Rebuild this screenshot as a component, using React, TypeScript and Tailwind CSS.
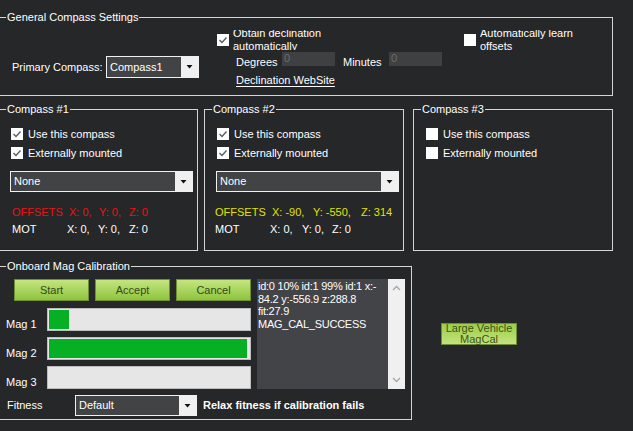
import type { ReactNode } from 'react'

const bg = 'bg-[#262729]'

function Check({ checked }: { checked?: boolean }) {
    return (
        <span className="w-[12px] h-[12px] bg-white flex items-center justify-center shrink-0">
            {checked && (
                <svg width="10" height="10" viewBox="0 0 10 10">
                    <path d="M1.5 5 L4 7.5 L8.5 2.5" fill="none" stroke="#5c5c5c" strokeWidth="1.4" />
                </svg>
            )}
        </span>
    )
}

function Combo({ value, className }: { value: string; className: string }) {
    return (
        <div className={`flex border border-[#f0f0f0] bg-[#424345] ${className}`}>
            <span className="flex-1 pl-[3px] self-center leading-[13px]">{value}</span>
            <span className="w-[17px] bg-[#f0f0f0] flex items-center justify-center">
                <svg width="7" height="4" viewBox="0 0 7 4">
                    <path d="M0.5 0h6L3.5 3.5z" fill="#111" />
                </svg>
            </span>
        </div>
    )
}

function Group({ title, className, children }: { title: string; className: string; children?: ReactNode }) {
    return (
        <div className={`relative shrink-0 border border-[#d6d6d6] ${className}`}>
            <span className={`absolute left-[7px] -top-[7px] px-px leading-[13px] ${bg}`}>{title}</span>
            {children}
        </div>
    )
}

// label whose first line is clipped by the control's box, as in the original form
function ClippedLabel({ lines }: { lines: [string, string] }) {
    return (
        <div className="ml-[4px] h-[20px] overflow-hidden">
            <div className="-mt-[3px] leading-[13px]">
                {lines[0]}
                <br />
                {lines[1]}
            </div>
        </div>
    )
}

type Row = { label: string; cols: [number, string][] }

const compasses: {
    title: string
    use: boolean
    ext: boolean
    shift: number
    offsets?: Row & { color: string }
    mot?: Row
}[] = [
    {
        title: 'Compass #1',
        use: true,
        ext: true,
        shift: 1,
        offsets: { label: 'OFFSETS', color: 'text-[#e81414]', cols: [[57, 'X: 0,'], [30, 'Y: 0,'], [30, 'Z: 0']] },
        mot: { label: 'MOT', cols: [[55, 'X: 0,'], [31, 'Y: 0,'], [31, 'Z: 0']] },
    },
    {
        title: 'Compass #2',
        use: true,
        ext: true,
        shift: -2,
        offsets: { label: 'OFFSETS', color: 'text-[#e2e200]', cols: [[57, 'X: -90,'], [41, 'Y: -550,'], [48, 'Z: 314']] },
        mot: { label: 'MOT', cols: [[55, 'X: 0,'], [32, 'Y: 0,'], [30, 'Z: 0']] },
    },
    { title: 'Compass #3', use: false, ext: false, shift: 0 },
]

const mags = [
    { name: 'Mag 1', pct: 10 },
    { name: 'Mag 2', pct: 99 },
    { name: 'Mag 3', pct: 0 },
]

// each col: [offset from previous token start, text]
function ValueRow({ row, color, shift }: { row: Row; color?: string; shift: number }) {
    return (
        <div className={`flex leading-[17px] ${color ?? ''}`} style={{ marginLeft: shift }}>
            <span className="shrink-0" style={{ width: row.cols[0][0] }}>{row.label}</span>
            {row.cols.map(([, text], i) => (
                <span key={text + i} className="shrink-0" style={{ width: row.cols[i + 1]?.[0] }}>
                    {text}
                </span>
            ))}
        </div>
    )
}

export default function App() {
    return (
        <div className={`w-[633px] h-[431px] overflow-hidden ${bg} text-white text-[11px] leading-[13px] font-['Liberation_Sans',Arial,sans-serif] flex flex-col`}>
            {/* General */}
            <Group title="General Compass Settings" className="-ml-[2px] mt-[17px] w-[615px] h-[79px]">
                <div className="flex items-start">
                    <div className="ml-[13px] mt-[38px] flex items-center">
                        <span className="w-[94px]">Primary Compass:</span>
                        <Combo value="Compass1" className="w-[93px] h-[22px]" />
                    </div>
                    <div className="ml-[18px] mt-[12px] w-[225px] flex flex-col">
                        <div className="flex h-[20px]">
                            <div className="mt-[4px]"><Check checked /></div>
                            <ClippedLabel lines={['Obtain declination', 'automatically']} />
                        </div>
                        <div className="flex items-start mt-[2px] h-[14px]">
                            <span className="ml-[19px] w-[46px] mt-[4px]">Degrees</span>
                            <span className="w-[53px] h-[14px] bg-[#3f4042] text-[#6c6c6c] pl-[2px]">0</span>
                            <span className="ml-[8px] w-[46px] mt-[4px]">Minutes</span>
                            <span className="w-[53px] h-[14px] bg-[#3f4042] text-[#6c6c6c] pl-[2px]">0</span>
                        </div>
                        <span className="ml-[19px] mt-[8px] underline underline-offset-[2px]">Declination WebSite</span>
                    </div>
                    <div className="ml-[22px] mt-[12px] flex h-[20px]">
                        <div className="mt-[4px]"><Check /></div>
                        <ClippedLabel lines={['Automatically learn', 'offsets']} />
                    </div>
                </div>
            </Group>

            {/* Compasses */}
            <div className="flex mt-[13px] -ml-[2px]">
                {compasses.map((c, i) => (
                    <Group key={c.title} title={c.title} className={`w-[200px] h-[142px] ${i === 1 ? 'ml-[6px]' : i === 2 ? 'ml-[9px]' : ''}`}>
                        <div className="flex flex-col pl-[12px] pt-[18px]">
                            <div className="flex items-center h-[12px] gap-[5px]">
                                <Check checked={c.use} />
                                <span>Use this compass</span>
                            </div>
                            <div className="flex items-center h-[12px] gap-[5px] mt-[7px]">
                                <Check checked={c.ext} />
                                <span>Externally mounted</span>
                            </div>
                            {c.offsets && c.mot && (
                                <>
                                    <Combo value="None" className="mt-[12px] -ml-px w-[183px] h-[21px]" />
                                    <div className="mt-[12px]">
                                        <ValueRow row={c.offsets} color={c.offsets.color} shift={c.shift} />
                                        <ValueRow row={c.mot} shift={c.shift} />
                                    </div>
                                </>
                            )}
                        </div>
                    </Group>
                ))}
            </div>

            {/* Onboard Mag Calibration */}
            <div className="flex items-start mt-[15px] -ml-[2px]">
                <Group title="Onboard Mag Calibration" className="w-[414px] h-[154px]">
                    <div className="flex mt-[12px]">
                        <div className="ml-[7px] w-[245px] flex flex-col">
                            <div className="flex gap-[6px] ml-[8px]">
                                {['Start', 'Accept', 'Cancel'].map((b) => (
                                    <button key={b} className="w-[75px] h-[22px] border border-[#6f8f33] bg-gradient-to-b from-[#c4e57e] to-[#8fc43a] text-[#33491a]">
                                        {b}
                                    </button>
                                ))}
                            </div>
                            <div className="flex flex-col gap-[6px] mt-[7px]">
                                {mags.map((m) => (
                                    <div key={m.name} className="flex items-end">
                                        <span className="w-[41px]">{m.name}</span>
                                        <div className="w-[204px] h-[23px] border border-[#bcbcbc] bg-[#e6e6e6] p-px">
                                            <div className="h-full bg-[#06b025]" style={{ width: `${m.pct}%` }} />
                                        </div>
                                    </div>
                                ))}
                            </div>
                        </div>
                        <div className="ml-[6px] w-[148px] h-[110px] flex bg-[#434447]">
                            <div className="flex-1 pl-px pt-px leading-[12.7px] tracking-[-0.25px]">
                                id:0 10% id:1 99% id:1 x:-<br />84.2 y:-556.9 z:288.8<br />fit:27.9<br />MAG_CAL_SUCCESS
                            </div>
                            <div className="w-[17px] bg-[#f0f0f0] flex flex-col items-center justify-between py-[6px]">
                                <svg width="9" height="6" viewBox="0 0 9 6">
                                    <path d="M1 5 L4.5 1.5 L8 5" fill="none" stroke="#a6a6a6" strokeWidth="1.3" />
                                </svg>
                                <svg width="9" height="6" viewBox="0 0 9 6">
                                    <path d="M1 1 L4.5 4.5 L8 1" fill="none" stroke="#a6a6a6" strokeWidth="1.3" />
                                </svg>
                            </div>
                        </div>
                    </div>
                    <div className="flex items-center mt-[6px] h-[21px]">
                        <span className="ml-[8px] w-[68px]">Fitness</span>
                        <Combo value="Default" className="w-[122px] h-[21px]" />
                        <span className="ml-[6px] font-bold">Relax fitness if calibration fails</span>
                    </div>
                </Group>
                <button className="ml-[29px] mt-[57px] w-[76px] h-[22px] border border-[#6f8f33] bg-gradient-to-b from-[#9ccd45] to-[#c3e37f] text-[#3b5512] leading-[11px] flex flex-col items-center justify-center">
                    <span>Large Vehicle</span>
                    <span>MagCal</span>
                </button>
            </div>
        </div>
    )
}
